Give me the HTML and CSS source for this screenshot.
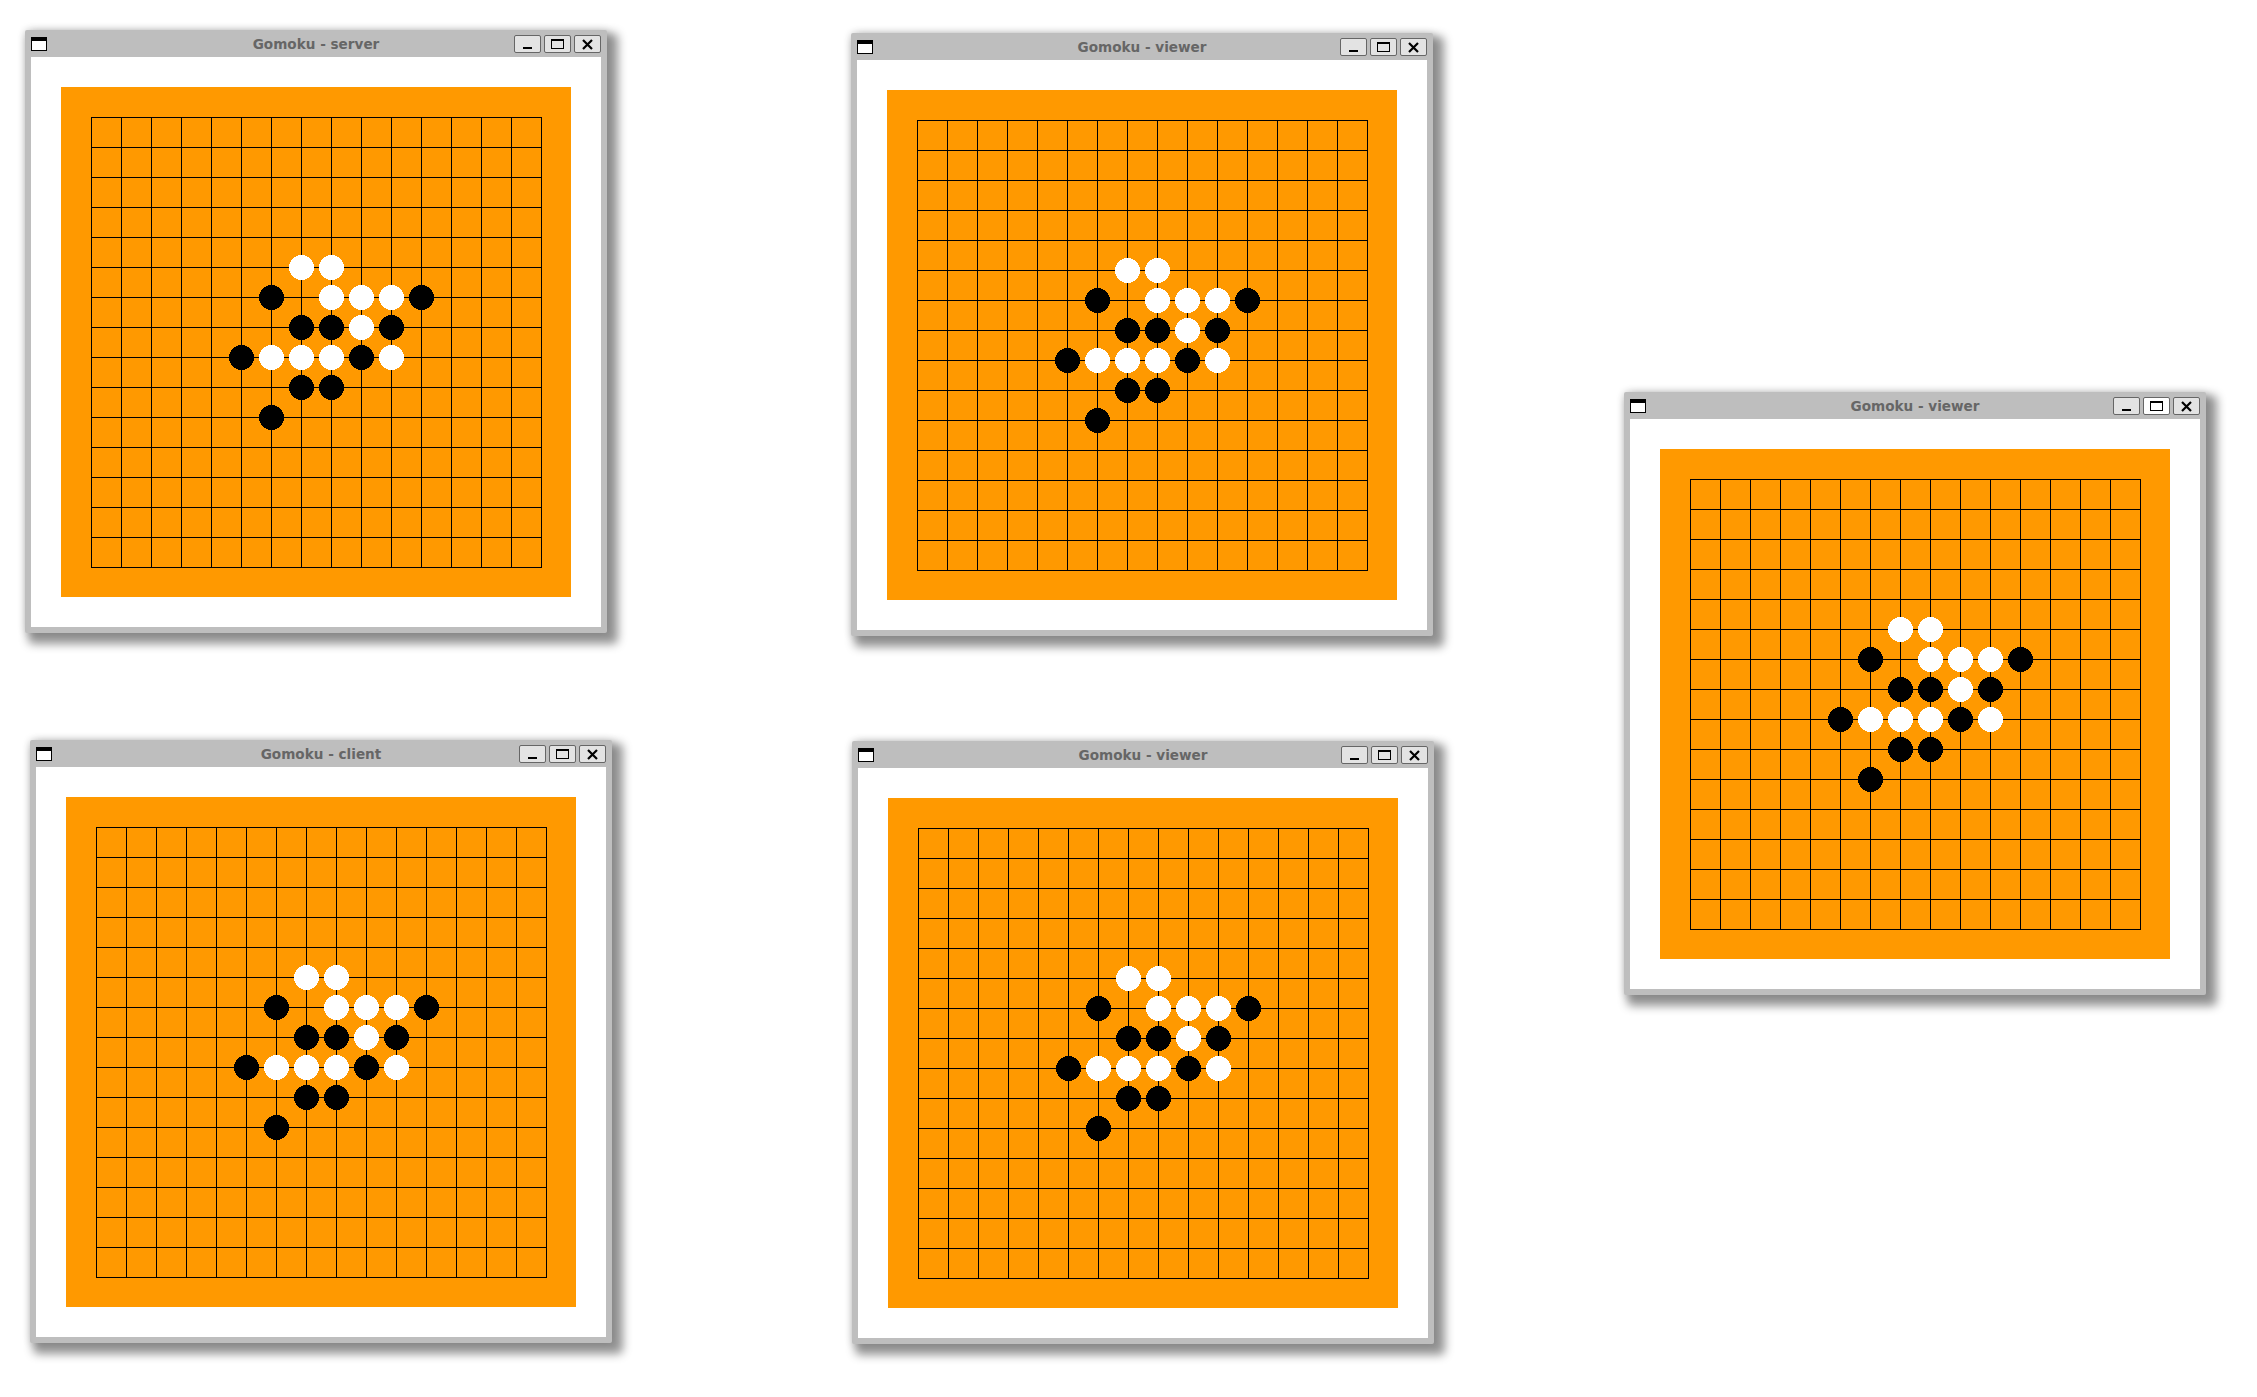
FILE: index.html
```html
<!DOCTYPE html>
<html lang="en">
<head>
    <meta charset="UTF-8">
    <title>Gomoku</title>
    <link rel="stylesheet" href="styles.css">
</head>
<body>

<svg class="defs" width="0" height="0">
    <symbol id="window-icon" viewBox="0 0 16 14">
        <rect x="0.5" y="0.5" width="15" height="13" fill="#fff" stroke="#000"/>
        <rect x="0" y="0" width="16" height="4" fill="#000"/>
    </symbol>
    <symbol id="min-icon" viewBox="0 0 18 12">
        <rect x="4" y="9" width="9" height="2" fill="#000"/>
    </symbol>
    <symbol id="max-icon" viewBox="0 0 18 12">
        <rect x="2.5" y="1.5" width="12" height="9" fill="none" stroke="#000"/>
        <rect x="2" y="1" width="13" height="2" fill="#000"/>
    </symbol>
    <symbol id="close-icon" viewBox="0 0 18 12">
        <path d="M4 2 L13 11 M13 2 L4 11" stroke="#000" stroke-width="2.2" fill="none"/>
    </symbol>

    <symbol id="board" viewBox="0 0 510 510">
        <rect width="510" height="510" fill="#ff9900"/>
        <g shape-rendering="crispEdges" stroke="#000" fill="none">
            <path d="M30.5 30V481 M60.5 30V481 M90.5 30V481 M120.5 30V481 M150.5 30V481 M180.5 30V481 M210.5 30V481 M240.5 30V481 M270.5 30V481 M300.5 30V481 M330.5 30V481 M360.5 30V481 M390.5 30V481 M420.5 30V481 M450.5 30V481 M480.5 30V481"/>
            <path d="M30 30.5H481 M30 60.5H481 M30 90.5H481 M30 120.5H481 M30 150.5H481 M30 180.5H481 M30 210.5H481 M30 240.5H481 M30 270.5H481 M30 300.5H481 M30 330.5H481 M30 360.5H481 M30 390.5H481 M30 420.5H481 M30 450.5H481 M30 480.5H481"/>
        </g>
        <g shape-rendering="crispEdges" fill="#fff">
            <circle cx="240.5" cy="180.5" r="12.5"/>
            <circle cx="270.5" cy="180.5" r="12.5"/>
            <circle cx="270.5" cy="210.5" r="12.5"/>
            <circle cx="300.5" cy="210.5" r="12.5"/>
            <circle cx="330.5" cy="210.5" r="12.5"/>
            <circle cx="300.5" cy="240.5" r="12.5"/>
            <circle cx="210.5" cy="270.5" r="12.5"/>
            <circle cx="240.5" cy="270.5" r="12.5"/>
            <circle cx="270.5" cy="270.5" r="12.5"/>
            <circle cx="330.5" cy="270.5" r="12.5"/>
        </g>
        <g shape-rendering="crispEdges" fill="#000">
            <circle cx="210.5" cy="210.5" r="12.5"/>
            <circle cx="360.5" cy="210.5" r="12.5"/>
            <circle cx="240.5" cy="240.5" r="12.5"/>
            <circle cx="270.5" cy="240.5" r="12.5"/>
            <circle cx="330.5" cy="240.5" r="12.5"/>
            <circle cx="180.5" cy="270.5" r="12.5"/>
            <circle cx="300.5" cy="270.5" r="12.5"/>
            <circle cx="240.5" cy="300.5" r="12.5"/>
            <circle cx="270.5" cy="300.5" r="12.5"/>
            <circle cx="210.5" cy="330.5" r="12.5"/>
        </g>
    </symbol>
</svg>

<div class="window win-server">
    <div class="titlebar">
        <svg class="win-icon"><use href="#window-icon"/></svg>
        <span class="title">Gomoku - server</span>
        <div class="buttons">
            <div class="btn"><svg><use href="#min-icon"/></svg></div>
            <div class="btn"><svg><use href="#max-icon"/></svg></div>
            <div class="btn"><svg><use href="#close-icon"/></svg></div>
        </div>
    </div>
    <div class="client"><svg class="board"><use href="#board"/></svg></div>
</div>

<div class="window win-viewer-top">
    <div class="titlebar">
        <svg class="win-icon"><use href="#window-icon"/></svg>
        <span class="title">Gomoku - viewer</span>
        <div class="buttons">
            <div class="btn"><svg><use href="#min-icon"/></svg></div>
            <div class="btn"><svg><use href="#max-icon"/></svg></div>
            <div class="btn"><svg><use href="#close-icon"/></svg></div>
        </div>
    </div>
    <div class="client"><svg class="board"><use href="#board"/></svg></div>
</div>

<div class="window win-viewer-right">
    <div class="titlebar">
        <svg class="win-icon"><use href="#window-icon"/></svg>
        <span class="title">Gomoku - viewer</span>
        <div class="buttons">
            <div class="btn"><svg><use href="#min-icon"/></svg></div>
            <div class="btn btn-hover"><svg><use href="#max-icon"/></svg></div>
            <div class="btn"><svg><use href="#close-icon"/></svg></div>
        </div>
    </div>
    <div class="client"><svg class="board"><use href="#board"/></svg></div>
</div>

<div class="window win-client">
    <div class="titlebar">
        <svg class="win-icon"><use href="#window-icon"/></svg>
        <span class="title">Gomoku - client</span>
        <div class="buttons">
            <div class="btn"><svg><use href="#min-icon"/></svg></div>
            <div class="btn"><svg><use href="#max-icon"/></svg></div>
            <div class="btn"><svg><use href="#close-icon"/></svg></div>
        </div>
    </div>
    <div class="client"><svg class="board"><use href="#board"/></svg></div>
</div>

<div class="window win-viewer-bottom">
    <div class="titlebar">
        <svg class="win-icon"><use href="#window-icon"/></svg>
        <span class="title">Gomoku - viewer</span>
        <div class="buttons">
            <div class="btn"><svg><use href="#min-icon"/></svg></div>
            <div class="btn"><svg><use href="#max-icon"/></svg></div>
            <div class="btn"><svg><use href="#close-icon"/></svg></div>
        </div>
    </div>
    <div class="client"><svg class="board"><use href="#board"/></svg></div>
</div>

</body>
</html>
```

FILE: styles.css
```css
html, body {
    margin: 0;
    padding: 0;
    background: #fff;
}

body {
    position: relative;
    width: 2257px;
    height: 1397px;
    overflow: hidden;
    font-family: 'DejaVu Sans', sans-serif;
}

.defs {
    position: absolute;
}

/* Windows sit on a free desktop, so each one has its own place */
.window {
    position: absolute;
    display: flex;
    flex-direction: column;
    width: 582px;
    height: 603px;
    background: #bebebe;
    border-radius: 2px;
    box-shadow: 0 0 9px rgba(0, 0, 0, 0.14), 7px 7px 10px 4px rgba(0, 0, 0, 0.42);
}

.win-server { left: 25px; top: 30px; }
.win-viewer-top { left: 851px; top: 33px; }
.win-viewer-right { left: 1624px; top: 392px; }
.win-client { left: 30px; top: 740px; }
.win-viewer-bottom { left: 852px; top: 741px; }

.titlebar {
    position: relative;
    display: flex;
    align-items: center;
    justify-content: center;
    height: 27px;
    padding: 0 6px;
    flex: none;
}

.win-icon {
    position: absolute;
    left: 6px;
    top: 7px;
    width: 16px;
    height: 14px;
}

.title {
    font-size: 13.6px;
    font-weight: bold;
    color: #666;
}

.buttons {
    position: absolute;
    right: 6px;
    top: 5px;
    display: flex;
    gap: 3px;
}

.btn {
    box-sizing: border-box;
    display: flex;
    align-items: center;
    justify-content: center;
    width: 27px;
    height: 18px;
    background: #e3e3e3;
    border: 1px solid #666;
    border-radius: 2px;
}

.btn svg {
    width: 18px;
    height: 12px;
}

.btn-hover {
    background: #fff;
}

.client {
    margin: 0 6px;
    width: 570px;
    height: 570px;
    padding: 30px;
    box-sizing: border-box;
    background: #fff;
}

.board {
    display: block;
    width: 510px;
    height: 510px;
}
```
